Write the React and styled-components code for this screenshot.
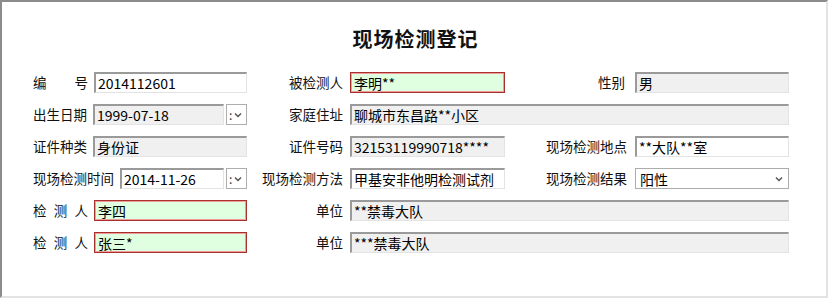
import React from "react";
import styled, { createGlobalStyle } from "styled-components";

const GlobalStyle = createGlobalStyle`
  body {
    margin: 0;
    background: #fff;
    font-family: "Noto Sans CJK SC", "Liberation Sans", sans-serif;
  }
`;

const Frame = styled.div`
  width: 828px;
  height: 298px;
  box-sizing: border-box;
  border-style: solid;
  border-width: 2px;
  border-color: #8c8c8c #e3e3e3 #e3e3e3 #8c8c8c;
  background: #fff;
  padding-left: 31px;
`;

const Title = styled.h1`
  margin: 25px 0 0 0;
  height: 24px;
  line-height: 24px;
  padding-left: 0;
  width: 765px;
  text-align: center;
  font-size: 20px;
  font-weight: 700;
  color: #111;
  letter-spacing: 1px;
`;

const Form = styled.div`
  margin-top: 21px;
  display: grid;
  grid-template-columns: 214px 103px 155px 130px 154px;
  grid-auto-rows: 21px;
  row-gap: 11px;
`;

const Cell = styled.div`
  display: flex;
  align-items: center;
  gap: 6px;
  min-width: 0;
`;

const Label = styled.div`
  font-size: 13.5px;
  line-height: 21px;
  color: #111;
  white-space: nowrap;
  text-align: ${(p) => (p.$right ? "right" : "left")};
  padding-right: ${(p) => p.$pad || 0}px;
`;

const SpreadLabel = styled.div`
  width: 55px;
  display: flex;
  justify-content: space-between;
  font-size: 13.5px;
  line-height: 21px;
  color: #111;
  flex: none;
`;

const Field = styled.input`
  box-sizing: border-box;
  height: 21px;
  min-width: 0;
  width: 100%;
  flex: 1;
  grid-column: ${(p) => p.$span || "auto"};
  margin: 0;
  padding: 0 2px;
  font-family: "Noto Sans CJK SC", "Liberation Sans", sans-serif;
  font-size: 14px;
  color: #000;
  outline: none;
  border-style: solid;
  border-width: 2px 1px 1px 2px;
  border-color: #9a9a9a #e3e3e3 #e3e3e3 #9a9a9a;
  background: ${(p) => (p.$gray ? "#f0f0f0" : "#fff")};

  ${(p) =>
    p.$required &&
    `
    border: 1px solid #a8302c;
    box-shadow: inset 0 0 0 1px #ef9c9c;
    background: #e0ffe0;
    padding: 0 3px;
  `}
`;

const DropBtn = styled.div`
  box-sizing: border-box;
  flex: none;
  width: 21px;
  height: 21px;
  margin-left: -4px;
  border: 1px solid #adadad;
  background: #fff;
  display: flex;
  align-items: center;
  padding-left: 2px;
  gap: 2px;
  font-size: 12px;
  color: #333;
`;

const Select = styled.div`
  box-sizing: border-box;
  height: 21px;
  border: 1px solid #acacac;
  background: #fff;
  display: flex;
  align-items: center;
  justify-content: space-between;
  padding: 0 5px 0 4px;
  font-size: 14px;
  color: #000;
`;

const Chevron = () => (
  <svg width="8" height="6" viewBox="0 0 8 6">
    <path d="M1 1.5 L4 4.5 L7 1.5" fill="none" stroke="#555" strokeWidth="1.5" />
  </svg>
);

const Spread = ({ text }) => (
  <SpreadLabel>
    {text.split("").map((c, i) => (
      <span key={i}>{c}</span>
    ))}
  </SpreadLabel>
);

export default function App() {
  return (
    <>
      <GlobalStyle />
      <Frame>
        <Title>现场检测登记</Title>
        <Form>
          {/* row 1 */}
          <Cell>
            <Spread text="编号" />
            <Field readOnly value="2014112601" />
          </Cell>
          <Label $right $pad={7}>被检测人</Label>
          <Field readOnly $required value="李明**" />
          <Label $right $pad={10}>性别</Label>
          <Field readOnly $gray value="男" />

          {/* row 2 */}
          <Cell>
            <Label>出生日期</Label>
            <Field readOnly $gray value="1999-07-18" />
            <DropBtn>
              :<Chevron />
            </DropBtn>
          </Cell>
          <Label $right $pad={7}>家庭住址</Label>
          <Field readOnly $gray $span="3 / 6" value="聊城市东昌路**小区" />

          {/* row 3 */}
          <Cell>
            <Label>证件种类</Label>
            <Field readOnly $gray value="身份证" />
          </Cell>
          <Label $right $pad={7}>证件号码</Label>
          <Field readOnly $gray value="32153119990718****" />
          <Label $right $pad={8}>现场检测地点</Label>
          <Field readOnly value="**大队**室" />

          {/* row 4 */}
          <Cell>
            <Label>现场检测时间</Label>
            <Field readOnly value="2014-11-26" />
            <DropBtn>
              :<Chevron />
            </DropBtn>
          </Cell>
          <Label $right $pad={7}>现场检测方法</Label>
          <Field readOnly value="甲基安非他明检测试剂（胶体金法）" />
          <Label $right $pad={8}>现场检测结果</Label>
          <Select>
            <span>阳性</span>
            <Chevron />
          </Select>

          {/* row 5 */}
          <Cell>
            <Spread text="检测人" />
            <Field readOnly $required value="李四" />
          </Cell>
          <Label $right $pad={7}>单位</Label>
          <Field readOnly $gray $span="3 / 6" value="**禁毒大队" />

          {/* row 6 */}
          <Cell>
            <Spread text="检测人" />
            <Field readOnly $required value="张三*" />
          </Cell>
          <Label $right $pad={7}>单位</Label>
          <Field readOnly $gray $span="3 / 6" value="***禁毒大队" />
        </Form>
      </Frame>
    </>
  );
}
